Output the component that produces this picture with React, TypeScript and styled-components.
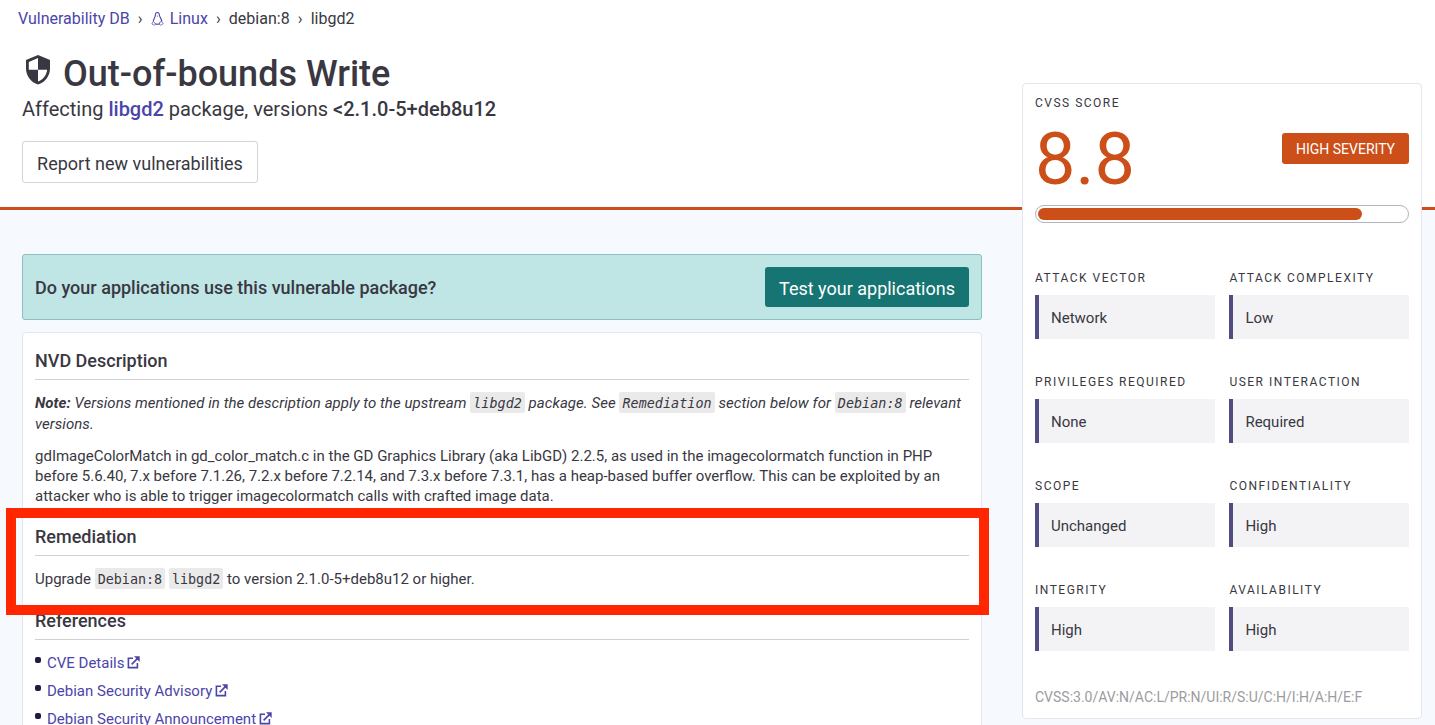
import React from "react";
import styled, { createGlobalStyle } from "styled-components";

const Global = createGlobalStyle`
  * { box-sizing: border-box; }
  body { margin: 0; overflow: hidden; background: #f6fafe; }
`;

const Page = styled.div`
  display: grid;
  grid-template-columns: 22px 960px 40px 400px 1fr;
  grid-template-rows: 210px 515px;
  width: 1435px;
  height: 725px;
  overflow: hidden;
  background: #f6fafe;
  color: #393842;
  font-family: Roboto, "Liberation Sans", sans-serif;
  font-size: 15px;
`;

const Hero = styled.header`
  grid-column: 1 / -1;
  grid-row: 1;
  background: #fff;
  border-bottom: 3px solid #cc4e18;
  padding: 9px 0 0 22px;
`;

const Breadcrumbs = styled.nav`
  display: flex;
  align-items: center;
  margin-left: -4px;
  height: 20px;
  font-size: 16px;
  line-height: 20px;
`;

const Crumb = styled.span<{ $link?: boolean }>`
  display: inline-flex;
  align-items: center;
  gap: 6px;
  color: ${(p) => (p.$link ? "#4b45a9" : "#393842")};
`;

const Separator = styled.span`
  width: 21px;
  text-align: center;
`;

const Title = styled.h1`
  display: flex;
  align-items: center;
  gap: 12px;
  height: 44px;
  margin: 23px 0 0 3px;
  font-size: 36px;
  font-weight: 500;
  line-height: 44px;

  svg { margin-top: -8px; }
`;

const Affecting = styled.p`
  margin: 0;
  height: 26px;
  font-size: 20px;
  line-height: 27px;

  b { font-weight: 500; }
`;

const PackageLink = styled.a`
  color: #4b45a9;
  font-weight: 500;
`;

const Button = styled.button<{ $primary?: boolean }>`
  height: ${(p) => (p.$primary ? "40px" : "42px")};
  width: ${(p) => (p.$primary ? "204px" : "236px")};
  padding: 2px 0 0;
  border: ${(p) => (p.$primary ? "0" : "1px solid #d3d3d9")};
  border-radius: 3px;
  background: ${(p) => (p.$primary ? "#167572" : "#fff")};
  color: ${(p) => (p.$primary ? "#fff" : "#393842")};
  font-family: inherit;
  font-size: 18px;
  white-space: nowrap;
`;

const ReportButton = styled(Button)`
  margin-top: 19px;
`;

const Main = styled.main`
  grid-column: 2;
  grid-row: 2;
  display: flex;
  flex-direction: column;
  gap: 12px;
  padding-top: 44px;
`;

const Banner = styled.section`
  display: flex;
  flex: none;
  align-items: center;
  justify-content: space-between;
  height: 66px;
  padding: 0 12px;
  border: 1px solid #8cbfc0;
  border-radius: 3px;
  background: #bfe5e5;
  font-size: 18px;
  font-weight: 500;
`;

const Card = styled.section`
  flex: none;
  height: 460px;
  padding: 0 12px;
  border: 1px solid #e3e6ec;
  border-radius: 4px;
  background: #fff;
`;

const Heading = styled.h2<{ $top: number }>`
  height: 31px;
  margin: ${(p) => p.$top}px 0 13px;
  border-bottom: 1px solid #d0d0d3;
  font-size: 18px;
  font-weight: 500;
  line-height: 24px;
`;

const Paragraph = styled.p<{ $line?: number }>`
  margin: 0 -10px 0 0;
  line-height: ${(p) => p.$line ?? 20}px;
  white-space: pre-line;
  b { font-weight: 700; }
`;

const Note = styled(Paragraph)`
  margin-bottom: 11px;
  font-style: italic;
  letter-spacing: 0.05px;
`;

const Code = styled.code`
  display: inline-block;
  height: 21px;
  margin: -4px 0;
  padding: 0 3px;
  border-radius: 2px;
  background: #eaeaea;
  font-family: "DejaVu Sans Mono", monospace;
  font-size: 13.4px;
  line-height: 24px;
  vertical-align: baseline;
`;

const Highlight = styled.div`
  position: absolute;
  left: 6px;
  top: 508px;
  width: 983px;
  height: 107px;
  border: 10px solid #ff2600;
  pointer-events: none;
`;

const References = styled.ul`
  margin: 0;
  padding: 0;
  list-style: none;
`;

const Reference = styled.li`
  display: flex;
  align-items: center;
  height: 28px;
  padding-bottom: 8px;
  color: #4b45a9;
  line-height: 20px;

  &::before {
    content: "";
    width: 6px;
    height: 6px;
    margin: -6px 6px 0 0;
    border-radius: 2px;
    background: #1f1a44;
  }
  svg { margin-left: 3px; margin-top: -2px; }
`;

const ScoreCard = styled.aside`
  grid-column: 4;
  grid-row: 1 / 3;
  height: 636px;
  margin-top: 83px;
  padding: 0 12px;
  border: 1px solid #e3e6ec;
  border-radius: 4px;
  background: #fff;
`;

const Label = styled.div`
  height: 16px;
  font-size: 12px;
  letter-spacing: 1.5px;
  line-height: 16px;
  white-space: nowrap;
`;

const ScoreLabel = styled(Label)`
  margin-top: 11px;
`;

const ScoreRow = styled.div`
  display: flex;
  align-items: flex-start;
  justify-content: space-between;
  height: 94px;
`;

const Score = styled.div`
  color: #cc4e18;
  font-size: 72px;
  line-height: 98px;
`;

const Severity = styled.span`
  width: 127px;
  height: 31px;
  margin-top: 22px;
  border-radius: 3px;
  background: #cc4e18;
  color: #fff;
  font-size: 14px;
  line-height: 32px;
  text-align: center;
`;

const Meter = styled.div`
  height: 18px;
  padding: 2px;
  border: 1px solid #b3b2bd;
  border-radius: 9px;
`;

const MeterFill = styled.div`
  height: 12px;
  border-radius: 6px;
  background: #cc4e18;
`;

const Metrics = styled.div`
  display: grid;
  grid-template-columns: 1fr 1fr;
  column-gap: 14.8px;
  grid-auto-rows: 104px;
  margin-top: 47px;
`;

const MetricValue = styled.div`
  height: 44px;
  margin-top: 9px;
  padding-left: 12px;
  border-left: 4px solid #514c82;
  background: #f3f3f6;
  line-height: 46px;
`;

const Vector = styled.div`
  margin-top: 1px;
  color: #9c9ca0;
  font-size: 14px;
  line-height: 20px;
`;

const metrics = [
  ["ATTACK VECTOR", "Network"],
  ["ATTACK COMPLEXITY", "Low"],
  ["PRIVILEGES REQUIRED", "None"],
  ["USER INTERACTION", "Required"],
  ["SCOPE", "Unchanged"],
  ["CONFIDENTIALITY", "High"],
  ["INTEGRITY", "High"],
  ["AVAILABILITY", "High"],
];

const references = ["CVE Details", "Debian Security Advisory", "Debian Security Announcement"];

const score = 8.8;

const LinuxIcon = () => (
  <svg width="13" height="14" viewBox="0 0 13 14" fill="none" stroke="currentColor" strokeWidth="0.8">
    <path d="M4.300 3C4.300 1.300 5.100.5 6.300.5s2.100.8 2.100 2.600c0 2.200 2.400 3.600 2.400 6.500M4.300 3c.2 2.400-2.200 4-2 6.600" strokeWidth="1.100" />
    <path d="M5.300 3.700h2L6.300 4.700z" fill="currentColor" stroke="none" />
    <path d="M4.400 11.800c1.300.6 2.800.6 4.200 0" strokeWidth="1.100" />
    <path d="M2.400 9.500L.8 11.900l2.500 1.300 1.300-.9-.8-1.500zM10.600 9.500l1.700 2.200-2.500 1.500-1.300-.8.300-2.500z" strokeWidth="0.700" />
  </svg>
);

const ShieldIcon = () => (
  <svg width="26" height="30" viewBox="0 0 26 30">
    <path fill="#393842" d="M13 0L1 5v8.500C1 21 6 27.400 13 29.500 20 27.400 25 21 25 13.500V5z" />
    <path fill="#fff" d="M13 3V14.700H3.800V6.900zM13 14.700h9.200C21.500 20.200 18 24.900 13 26.600z" />
  </svg>
);

const ExternalIcon = () => (
  <svg width="13" height="13" viewBox="0 0 13 13" fill="none" stroke="currentColor" strokeWidth="1.600">
    <path d="M6 2.300H1.400v9.300h9V7M4.600 8.400l6-6" />
    <path d="M7 .2h5.700v5.700z" fill="currentColor" stroke="none" />
  </svg>
);

export default function App() {
  return (
    <Page>
      <Global />
      <Hero>
        <Breadcrumbs>
          <Crumb $link>Vulnerability DB</Crumb>
          <Separator>›</Separator>
          <Crumb $link><LinuxIcon />Linux</Crumb>
          <Separator>›</Separator>
          <Crumb>debian:8</Crumb>
          <Separator>›</Separator>
          <Crumb>libgd2</Crumb>
        </Breadcrumbs>
        <Title><ShieldIcon />Out-of-bounds Write</Title>
        <Affecting>
          Affecting <PackageLink>libgd2</PackageLink> package, versions <b>&lt;2.1.0-5+deb8u12</b>
        </Affecting>
        <ReportButton>Report new vulnerabilities</ReportButton>
      </Hero>
      <Main>
        <Banner>
          <span>Do your applications use this vulnerable package?</span>
          <Button $primary>Test your applications</Button>
        </Banner>
        <Card>
          <Heading $top={16}>NVD Description</Heading>
          <Note $line={21}>
            <b>Note:</b> Versions mentioned in the description apply to the upstream <Code>libgd2</Code> package. See <Code>Remediation</Code> section below for <Code>Debian:8</Code> relevant{"\n"}versions.
          </Note>
          <Paragraph>
            gdImageColorMatch in gd_color_match.c in the GD Graphics Library (aka LibGD) 2.2.5, as used in the imagecolormatch function in PHP{"\n"}before 5.6.40, 7.x before 7.1.26, 7.2.x before 7.2.14, and 7.3.x before 7.3.1, has a heap-based buffer overflow. This can be exploited by an{"\n"}attacker who is able to trigger imagecolormatch calls with crafted image data.
          </Paragraph>
          <Heading $top={19}>Remediation</Heading>
          <Paragraph $line={21}>
            Upgrade <Code>Debian:8</Code> <Code>libgd2</Code> to version 2.1.0-5+deb8u12 or higher.
          </Paragraph>
          <Heading $top={19}>References</Heading>
          <References>
            {references.map((name) => (
              <Reference key={name}>{name}<ExternalIcon /></Reference>
            ))}
          </References>
        </Card>
      </Main>
      <ScoreCard>
        <ScoreLabel>CVSS SCORE</ScoreLabel>
        <ScoreRow>
          <Score>{score}</Score>
          <Severity>HIGH SEVERITY</Severity>
        </ScoreRow>
        <Meter><MeterFill style={{ width: `${score * 10}%` }} /></Meter>
        <Metrics>
          {metrics.map(([label, value]) => (
            <div key={label}>
              <Label>{label}</Label>
              <MetricValue>{value}</MetricValue>
            </div>
          ))}
        </Metrics>
        <Vector>CVSS:3.0/AV:N/AC:L/PR:N/UI:R/S:U/C:H/I:H/A:H/E:F</Vector>
      </ScoreCard>
      <Highlight />
    </Page>
  );
}
